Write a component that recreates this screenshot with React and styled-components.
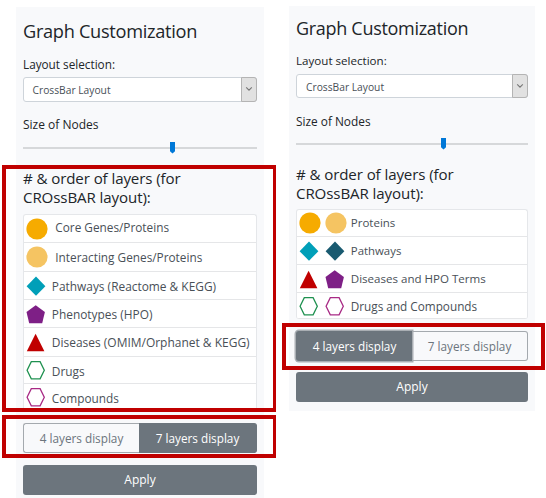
import React from "react";
import styled, { createGlobalStyle, css } from "styled-components";

const GlobalStyle = createGlobalStyle`
  * { box-sizing: border-box; }
  body {
    margin: 0;
    background: #fff;
    overflow: hidden;
    font-family: "Open Sans", "Noto Sans", sans-serif;
    color: #212529;
  }
`;

const Page = styled.main`
  position: relative;
  display: flex;
  align-items: flex-start;
  gap: 25px;
  width: 546px;
  height: 498px;
  padding: 6px 0 0 16px;
  overflow: hidden;
`;

const Panel = styled.section`
  display: grid;
  grid-template-columns: 100%;
  grid-template-rows: ${(p) => p.$rows};
  align-items: center;
  flex: none;
  width: ${(p) => p.$width}px;
  height: ${(p) => p.$height}px;
  margin-top: ${(p) => p.$top || 0}px;
  padding: 0 7px;
  background: #f8f9fb;
`;

const Title = styled.h1`
  margin: 0;
  font-size: ${(p) => p.$size}px;
  font-weight: 400;
  letter-spacing: -0.3px;
  line-height: 24px;
  white-space: nowrap;
`;

const Label = styled.label`
  align-self: ${(p) => p.$align || "center"};
  font-size: ${(p) => p.$size}px;
  line-height: 18px;
  white-space: nowrap;
`;

const SelectBox = styled.div`
  display: flex;
  height: ${(p) => p.$height}px;
  border: 1px solid #ced4da;
  border-radius: 3px;
  background: #fff;
  color: #495057;
  font-size: 10.25px;
`;

const SelectValue = styled.span`
  flex: 1;
  padding: 2px 0 0 ${(p) => p.$indent}px;
  line-height: 21px;
`;

const SelectArrow = styled.span`
  display: flex;
  align-items: center;
  justify-content: center;
  width: 16px;
  margin: -1px;
  border: 1px solid #b4b4b4;
  border-radius: 0 3px 3px 0;
  background: #e1e1e1;
`;

const Track = styled.div`
  position: relative;
  height: 2px;
  background: #d6d8da;
`;

const Thumb = styled.svg`
  position: absolute;
  top: -5px;
  left: ${(p) => p.$left}px;
`;

const Heading = styled.h2`
  margin: 0;
  font-size: 15.1px;
  font-weight: 400;
  letter-spacing: -0.1px;
  line-height: 19px;
`;

const List = styled.ul`
  align-self: start;
  margin: 0;
  padding: 0;
  list-style: none;
  border: 1px solid #e5e7ea;
  border-width: 1px 1px 0;
  border-radius: 3px;
  background: #fff;
  overflow: hidden;
`;

const Row = styled.li`
  display: flex;
  align-items: center;
  height: ${(p) => p.$height}px;
  padding-left: 2px;
  border-bottom: 1px solid #e5e6e8;
  color: #495057;
  font-size: ${(p) => p.$size}px;
  white-space: nowrap;
`;

const IconSlot = styled.span`
  display: flex;
  flex: none;
  width: ${(p) => p.$width}px;
`;

const RowText = styled.span`
  line-height: 18px;
  margin-top: ${(p) => p.$shift || 0}px;
  margin-left: 0.8px;
`;

const Toggle = styled.div`
  display: grid;
  grid-template-columns: 116px 1fr;
  height: 30px;
  border-radius: 3px;
`;

const ToggleButton = styled.button`
  padding: 0 0 1px;
  border: 1px solid #a4a9ae;
  border-radius: ${(p) => (p.$side === "left" ? "3px 0 0 3px" : "0 3px 3px 0")};
  border-${(p) => (p.$side === "left" ? "right" : "left")}-width: 0;
  background: transparent;
  color: #6c757d;
  font: 400 11.75px "Open Sans", sans-serif;
  ${(p) =>
    p.$active &&
    css`
      border-color: #6c757d;
      background: #6c757d;
      color: #fff;
    `}
  ${(p) =>
    p.$focused &&
    css`
      box-shadow: 0 0 0 1.5px #a9aeb3;
    `}
`;

const ApplyButton = styled.button`
  height: 30px;
  padding: 0 0 1px;
  border: 0;
  border-radius: 3px;
  background: #6c757d;
  color: #fff;
  font: 400 12px "Open Sans", sans-serif;
`;

const Highlight = styled.div`
  position: absolute;
  left: ${(p) => p.$x}px;
  top: ${(p) => p.$y}px;
  width: ${(p) => p.$w}px;
  height: ${(p) => p.$h}px;
  border: 4px solid #c00000;
  border-right-width: ${(p) => p.$right || 4}px;
`;

const shapes = {
  circle: { w: 22, h: 22, el: <circle cx="11" cy="11" r="10.6" /> },
  diamond: { w: 20, h: 20, el: <path d="M10 .6 19.4 10.2 10 19.8.6 10.2Z" /> },
  pentagon: { w: 20, h: 20, el: <path d="M9.7 1.2 18.9 7.9 16.2 19.2H3.2L.5 7.9Z" /> },
  triangle: { w: 20, h: 20, el: <path d="M9.6 1.7 18.4 19.3H.8Z" /> },
  hexagon: { w: 20, h: 20, el: <path d="M5.3 1.6h8.8l4.2 8.6-4.2 8.6H5.3L1.1 10.2Z" /> },
};

function Shape({ kind, color }) {
  const { w, h, el } = shapes[kind];
  const outline = kind === "hexagon";
  return (
    <svg
      width={w}
      height={h}
      viewBox={`0 0 ${w} ${h}`}
      fill={outline ? "#fff" : color}
      stroke={outline ? color : "none"}
      strokeWidth="1.3"
    >
      {el}
    </svg>
  );
}

const sevenLayers = [
  { text: "Core Genes/Proteins", icons: [["circle", "#f6ab00"]], height: 28, slot: 28.5, shift: -3, size: 11.8 },
  { text: "Interacting Genes/Proteins", icons: [["circle", "#f5c462"]], height: 29, slot: 28.5, shift: -1, size: 11.8 },
  { text: "Pathways (Reactome & KEGG)", icons: [["diamond", "#009fb8"]], height: 28, slot: 25, shift: 1, size: 11.9 },
  { text: "Phenotypes (HPO)", icons: [["pentagon", "#7e1f86"]], height: 28, slot: 25, shift: 1, size: 11.9 },
  { text: "Diseases (OMIM/Orphanet & KEGG)", icons: [["triangle", "#c00000"]], height: 29, slot: 25, shift: 1, size: 11.98 },
  { text: "Drugs", icons: [["hexagon", "#1f9150"]], height: 27, slot: 25, shift: 1, size: 11.9 },
  { text: "Compounds", icons: [["hexagon", "#a82a85"]], height: 27, slot: 25, shift: 1, size: 11.8 },
];

const fourLayers = [
  { text: "Proteins", icons: [["circle", "#f6ab00"], ["circle", "#f5c462"]], height: 27, slot: 25.5, size: 11.5 },
  { text: "Pathways", icons: [["diamond", "#009fb8"], ["diamond", "#195a70"]], height: 28, slot: 25.5, size: 11.4 },
  { text: "Diseases and HPO Terms", icons: [["triangle", "#c00000"], ["pentagon", "#7e1f86"]], height: 28, slot: 25.5, size: 11.55 },
  { text: "Drugs and Compounds", icons: [["hexagon", "#1f9150"], ["hexagon", "#a82a85"]], height: 26, slot: 25.5, size: 11.75 },
];

function LayerPanel({ panel, titleSize, labelSizes, selectHeight, indent, thumb, layers, active, focused }) {
  return (
    <Panel $rows={panel.rows} $width={panel.width} $height={panel.height} $top={panel.top}>
      <Title $size={titleSize}>Graph Customization</Title>
      <Label $size={labelSizes[0]}>Layout selection:</Label>
      <SelectBox $height={selectHeight}>
        <SelectValue $indent={indent}>CrossBar Layout</SelectValue>
        <SelectArrow>
          <svg width="8" height="6" viewBox="0 0 8 6" fill="none" stroke="#777" strokeWidth="1.1">
            <path d="M1.2 1.4 4 4.2l2.8-2.8" />
          </svg>
        </SelectArrow>
      </SelectBox>
      <Label $size={labelSizes[1]} $align="end">Size of Nodes</Label>
      <Track>
        <Thumb $left={thumb} width="5" height="12" viewBox="0 0 5 12">
          <path d="M0 0h5v9.3L2.5 11.6 0 9.3Z" fill="#0078d7" />
        </Thumb>
      </Track>
      <Heading>
        # &amp; order of layers (for
        <br />
        CROssBAR layout):
      </Heading>
      <List>
        {layers.map((layer) => (
          <Row key={layer.text} $height={layer.height} $size={layer.size}>
            {layer.icons.map(([kind, color]) => (
              <IconSlot key={kind + color} $width={layer.slot}>
                <Shape kind={kind} color={color} />
              </IconSlot>
            ))}
            <RowText $shift={layer.shift}>{layer.text}</RowText>
          </Row>
        ))}
      </List>
      <Toggle>
        <ToggleButton $side="left" $active={active === 4} $focused={focused}>4 layers display</ToggleButton>
        <ToggleButton $side="right" $active={active === 7}>7 layers display</ToggleButton>
      </Toggle>
      <ApplyButton>Apply</ApplyButton>
    </Panel>
  );
}

export default function App() {
  return (
    <>
      <GlobalStyle />
      <Page>
        <LayerPanel
          panel={{ rows: "48px 18px 32px 29px 28px 52px 197px 54px 30px", width: 248, height: 491, top: 1 }}
          titleSize={18.2}
          labelSizes={[11.75, 12]}
          selectHeight={25}
          indent={8.5}
          thumb={147}
          layers={sevenLayers}
          active={7}
        />
        <LayerPanel
          panel={{ rows: "44px 21px 29px 30px 28px 51px 110px 54px 28px", width: 246, height: 405 }}
          titleSize={18}
          labelSizes={[11.6, 11.85]}
          selectHeight={24}
          indent={9}
          thumb={145}
          layers={fourLayers}
          active={4}
          focused
        />
        <Highlight $x={2} $y={165} $w={274} $h={247} $right={3} />
        <Highlight $x={2} $y={415} $w={274} $h={43} $right={3} />
        <Highlight $x={282} $y={323} $w={263} $h={47} />
      </Page>
    </>
  );
}
